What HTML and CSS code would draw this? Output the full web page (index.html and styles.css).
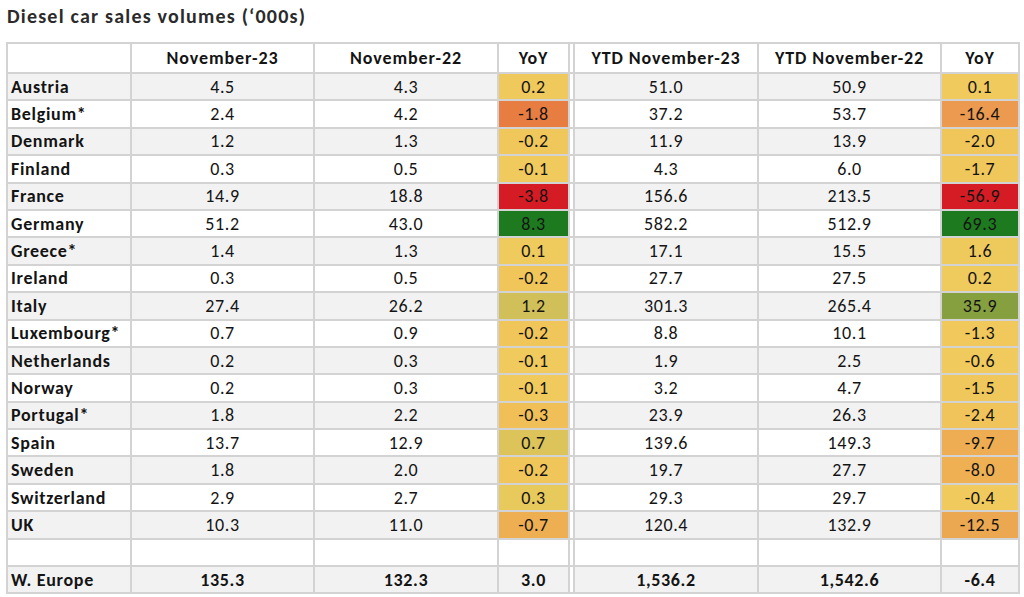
FILE: index.html
```html
<!DOCTYPE html>
<html>
<head>
<meta charset="utf-8">
<link rel="stylesheet" href="styles.css">
</head>
<body>
<h1 class="title">Diesel car sales volumes (‘000s)</h1>
<table class="sales">
<colgroup>
<col class="c-label"><col class="c-num"><col class="c-num2"><col class="c-yoy"><col class="c-sep"><col class="c-num2"><col class="c-num"><col class="c-yoy2">
</colgroup>
<thead>
<tr><th></th><th>November-23</th><th>November-22</th><th>YoY</th><th class="sep"></th><th>YTD November-23</th><th>YTD November-22</th><th>YoY</th></tr>
</thead>
<tbody>
<tr class="g"><td class="lbl">Austria</td><td>4.5</td><td>4.3</td><td class="y" style="background:#efc95b">0.2</td><td class="sep"></td><td>51.0</td><td>50.9</td><td class="y" style="background:#f0ca5c">0.1</td></tr>
<tr><td class="lbl">Belgium*</td><td>2.4</td><td>4.2</td><td class="y" style="background:#e87d42">-1.8</td><td class="sep"></td><td>37.2</td><td>53.7</td><td class="y" style="background:#eb9a4f">-16.4</td></tr>
<tr class="g"><td class="lbl">Denmark</td><td>1.2</td><td>1.3</td><td class="y" style="background:#f0c75a">-0.2</td><td class="sep"></td><td>11.9</td><td>13.9</td><td class="y" style="background:#f0c65a">-2.0</td></tr>
<tr><td class="lbl">Finland</td><td>0.3</td><td>0.5</td><td class="y" style="background:#f1ca5d">-0.1</td><td class="sep"></td><td>4.3</td><td>6.0</td><td class="y" style="background:#f0c75b">-1.7</td></tr>
<tr class="g"><td class="lbl">France</td><td>14.9</td><td>18.8</td><td class="y" style="background:#d51c24">-3.8</td><td class="sep"></td><td>156.6</td><td>213.5</td><td class="y" style="background:#d51c24">-56.9</td></tr>
<tr><td class="lbl">Germany</td><td>51.2</td><td>43.0</td><td class="y" style="background:#1e7a1f">8.3</td><td class="sep"></td><td>582.2</td><td>512.9</td><td class="y" style="background:#1e7a1f">69.3</td></tr>
<tr class="g"><td class="lbl">Greece*</td><td>1.4</td><td>1.3</td><td class="y" style="background:#efca5d">0.1</td><td class="sep"></td><td>17.1</td><td>15.5</td><td class="y" style="background:#eeca5d">1.6</td></tr>
<tr><td class="lbl">Ireland</td><td>0.3</td><td>0.5</td><td class="y" style="background:#f0c65a">-0.2</td><td class="sep"></td><td>27.7</td><td>27.5</td><td class="y" style="background:#efca5d">0.2</td></tr>
<tr class="g"><td class="lbl">Italy</td><td>27.4</td><td>26.2</td><td class="y" style="background:#d1bf5a">1.2</td><td class="sep"></td><td>301.3</td><td>265.4</td><td class="y" style="background:#86a03f">35.9</td></tr>
<tr><td class="lbl">Luxembourg*</td><td>0.7</td><td>0.9</td><td class="y" style="background:#f0c65a">-0.2</td><td class="sep"></td><td>8.8</td><td>10.1</td><td class="y" style="background:#f0c85b">-1.3</td></tr>
<tr class="g"><td class="lbl">Netherlands</td><td>0.2</td><td>0.3</td><td class="y" style="background:#f1ca5d">-0.1</td><td class="sep"></td><td>1.9</td><td>2.5</td><td class="y" style="background:#f0ca5c">-0.6</td></tr>
<tr><td class="lbl">Norway</td><td>0.2</td><td>0.3</td><td class="y" style="background:#f1ca5d">-0.1</td><td class="sep"></td><td>3.2</td><td>4.7</td><td class="y" style="background:#f0c75b">-1.5</td></tr>
<tr class="g"><td class="lbl">Portugal*</td><td>1.8</td><td>2.2</td><td class="y" style="background:#f0bf57">-0.3</td><td class="sep"></td><td>23.9</td><td>26.3</td><td class="y" style="background:#f0c45a">-2.4</td></tr>
<tr><td class="lbl">Spain</td><td>13.7</td><td>12.9</td><td class="y" style="background:#dcc35a">0.7</td><td class="sep"></td><td>139.6</td><td>149.3</td><td class="y" style="background:#eead52">-9.7</td></tr>
<tr class="g"><td class="lbl">Sweden</td><td>1.8</td><td>2.0</td><td class="y" style="background:#f0c65a">-0.2</td><td class="sep"></td><td>19.7</td><td>27.7</td><td class="y" style="background:#efb054">-8.0</td></tr>
<tr><td class="lbl">Switzerland</td><td>2.9</td><td>2.7</td><td class="y" style="background:#e8c95b">0.3</td><td class="sep"></td><td>29.3</td><td>29.7</td><td class="y" style="background:#f0ca5c">-0.4</td></tr>
<tr class="g"><td class="lbl">UK</td><td>10.3</td><td>11.0</td><td class="y" style="background:#eeae52">-0.7</td><td class="sep"></td><td>120.4</td><td>132.9</td><td class="y" style="background:#eca751">-12.5</td></tr>
<tr><td class="lbl"></td><td></td><td></td><td></td><td class="sep"></td><td></td><td></td><td></td></tr>
<tr class="g total"><td class="lbl">W. Europe</td><td>135.3</td><td>132.3</td><td>3.0</td><td class="sep"></td><td>1,536.2</td><td>1,542.6</td><td>-6.4</td></tr>
</tbody>
</table>
</body>
</html>
```
FILE: styles.css
```css
html, body {
  margin: 0;
  padding: 0;
  background: #ffffff;
}
body {
  font-family: Carlito, Lato, "Liberation Sans", sans-serif;
  color: #141414;
  padding: 3px 6px 0 6px;
}
.title {
  margin: 0;
  padding-left: 1px;
  font-size: 20px;
  font-weight: bold;
  letter-spacing: 1.2px;
  color: #2b2b2b;
  height: 39px;
  line-height: 26px;
}
.sales {
  border-collapse: collapse;
  table-layout: fixed;
  width: 1012px;
  font-size: 18px;
  letter-spacing: 0.6px;
}
.c-label { width: 124px; }
.c-num { width: 183px; }
.c-num2 { width: 184px; }
.c-yoy { width: 71px; }
.c-sep { width: 5px; }
.c-yoy2 { width: 78px; }
.sales th, .sales td {
  border: 2px solid #d3d3d3;
  text-align: center;
  padding: 0 3px;
  white-space: nowrap;
}
.sales th {
  height: 28px;
  font-weight: bold;
  background: #ffffff;
  letter-spacing: 0.9px;
}
.sales td {
  height: 25.4px;
}
.sales .g td {
  background: #f2f2f2;
}
.sales td.lbl {
  text-align: left;
  font-weight: bold;
  letter-spacing: 0.7px;
}
.sales .sep, .sales .g td.sep {
  background: #ffffff;
  padding: 0;
}
.sales .total td {
  font-weight: bold;
}
```
